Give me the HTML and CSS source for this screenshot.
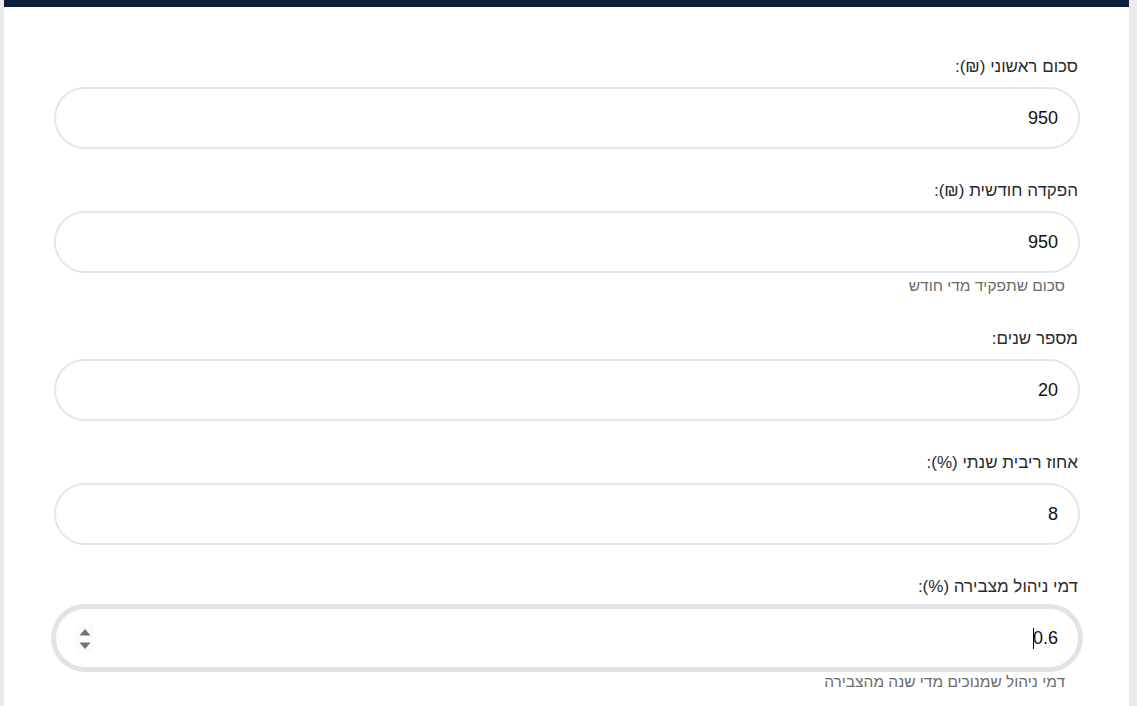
FILE: index.html
```html
<!DOCTYPE html>
<html lang="he" dir="rtl">
  <head>
    <meta charset="UTF-8" />
    <title>מחשבון ריבית דריבית</title>
    <link rel="stylesheet" href="styles.css">
  </head>
  <body>
    <div class="calculator">
      <div class="form-group">
        <label for="initial">סכום ראשוני (₪):</label>
        <input type="text" id="initial" class="field" value="950" />
      </div>

      <div class="form-group">
        <label for="monthly">הפקדה חודשית (₪):</label>
        <input type="text" id="monthly" class="field" value="950" />
        <div class="help">סכום שתפקיד מדי חודש</div>
      </div>

      <div class="form-group">
        <label for="years">מספר שנים:</label>
        <input type="text" id="years" class="field" value="20" />
      </div>

      <div class="form-group">
        <label for="rate">אחוז ריבית שנתי (%):</label>
        <input type="text" id="rate" class="field" value="8" />
      </div>

      <div class="form-group">
        <label for="fee">דמי ניהול מצבירה (%):</label>
        <div class="field-wrap">
          <input type="text" id="fee" class="field focused" value="0.6" />
          <span class="caret"></span>
          <span class="spinner">
            <svg width="12" height="28" viewBox="0 0 12 28">
              <path d="M6 4 L11.5 10.5 L0.5 10.5 Z" fill="#737373" />
              <path d="M0.5 17.5 L11.5 17.5 L6 24 Z" fill="#737373" />
            </svg>
          </span>
        </div>
        <div class="help">דמי ניהול שמנוכים מדי שנה מהצבירה</div>
      </div>
    </div>
  </body>
</html>
```

FILE: styles.css
```css
html {
  font-family: "Liberation Sans", Arial, sans-serif;
}
body {
  margin: 0;
  background-color: #ebebeb;
}
.calculator {
  margin: 0 8px 0 4px;
  min-height: 100vh;
  box-sizing: border-box;
  background-color: #fff;
  border-top: 7px solid #0e1f3b;
  padding: 48px 49px 0 50px;
}
.form-group {
  margin-bottom: 30px;
}
.form-group label {
  display: block;
  font-size: 17px;
  line-height: 24px;
  margin-bottom: 8px;
  padding-right: 2px;
  color: #2b2b2b;
}
.field {
  display: block;
  width: 100%;
  height: 62px;
  box-sizing: border-box;
  border: 2px solid #e4e6ea;
  border-radius: 31px;
  padding: 0 20px;
  font-family: inherit;
  font-size: 18px;
  color: #111;
  background-color: #fff;
  text-align: right;
}
.field.focused {
  outline: none;
  border-color: #e2e3e8;
  box-shadow: 0 0 0 3px #e2e3e8;
}
.field-wrap {
  position: relative;
}
.caret {
  position: absolute;
  top: 21px;
  right: 46px;
  width: 1px;
  height: 21px;
  background-color: #000;
}
.spinner {
  position: absolute;
  top: 17px;
  left: 21px;
  width: 19px;
  height: 30px;
  display: flex;
  align-items: center;
  justify-content: center;
  background-color: #fbfbfb;
}
.spinner svg {
  display: block;
}
.help {
  font-size: 15.5px;
  line-height: 22px;
  margin-top: 2px;
  padding-right: 15px;
  color: #6b6b6b;
}
```
